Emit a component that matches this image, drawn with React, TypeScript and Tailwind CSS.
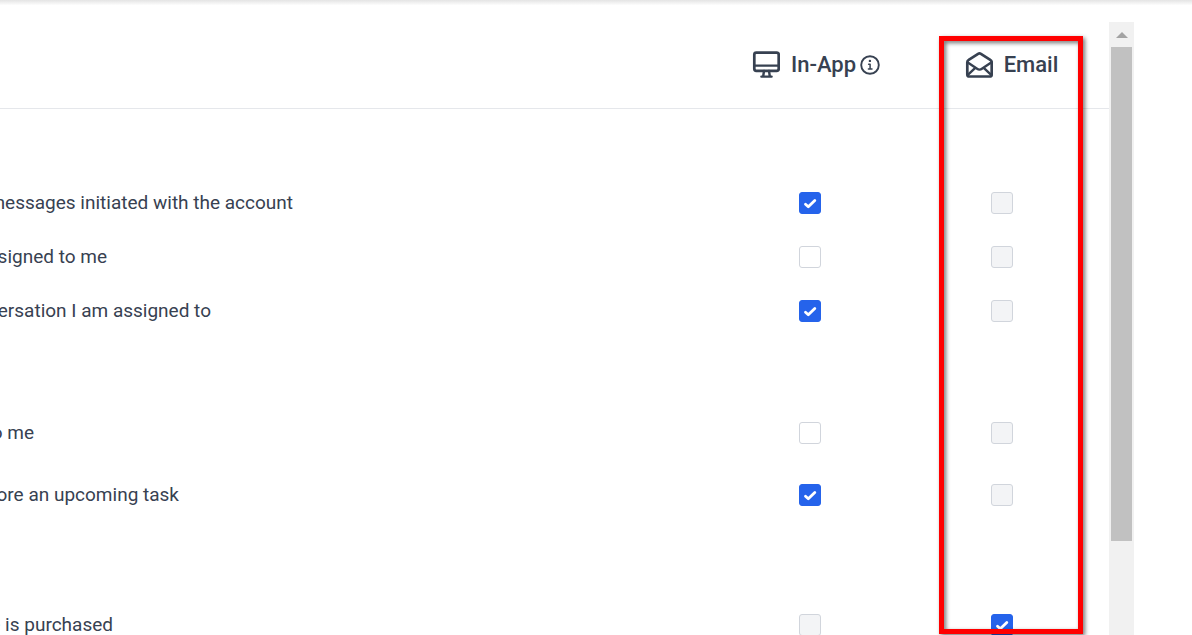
import { useState } from "react";

type Cell = { checked?: boolean; disabled?: boolean };

type Preference = {
  id: string;
  label: string;
  labelWidth: string;
  rowHeight: string;
  inApp: Cell;
  email: Cell;
};

const groups: Preference[][] = [
  [
    { id: "messages", label: "messages initiated with the account", labelWidth: "w-[293px]", rowHeight: "h-[54px]", inApp: { checked: true }, email: { disabled: true } },
    { id: "assigned", label: "ssigned to me", labelWidth: "w-[107px]", rowHeight: "h-[54px]", inApp: {}, email: { disabled: true } },
    { id: "conversation", label: "ersation I am assigned to", labelWidth: "w-[211px]", rowHeight: "h-[54px]", inApp: { checked: true }, email: { disabled: true } },
  ],
  [
    { id: "task-assigned", label: "o me", labelWidth: "w-[34px]", rowHeight: "h-[62px]", inApp: {}, email: { disabled: true } },
    { id: "task-upcoming", label: "ore an upcoming task", labelWidth: "w-[179px]", rowHeight: "h-[62px]", inApp: { checked: true }, email: { disabled: true } },
  ],
  [
    { id: "purchase", label: "e is purchased", labelWidth: "w-[113px]", rowHeight: "h-[62px]", inApp: { disabled: true }, email: { checked: true } },
  ],
];

function MonitorIcon() {
  return (
    <svg className="h-7 w-7 shrink-0" viewBox="0 0 28 28" fill="none" stroke="currentColor" strokeWidth="2.7" strokeLinecap="round" strokeLinejoin="round" aria-hidden="true">
      <rect x="2.3" y="1.6" width="24.4" height="18.2" rx="2" />
      <path d="M2.6 14.6h23.8" strokeWidth="2.2" />
      <path d="M12 20l-.8 5.2M17 20l.8 5.2M9.4 25.6h10.2" strokeWidth="2.4" />
    </svg>
  );
}

function OpenMailIcon() {
  return (
    <svg className="h-7 w-7 shrink-0" viewBox="0 0 28 28" fill="none" stroke="currentColor" strokeWidth="2.7" strokeLinecap="round" strokeLinejoin="round" aria-hidden="true">
      <path d="M2.3 11.2a2.8 2.8 0 0 1 1.4-2.4l9.4-6a2.6 2.6 0 0 1 2.8 0l9.4 6a2.8 2.8 0 0 1 1.4 2.4v12.3a2 2 0 0 1-2 2H4.3a2 2 0 0 1-2-2z" />
      <path d="M2.8 11.6l9.3 6.2a4.2 4.2 0 0 0 4.8 0l9.3-6.2M3.4 23.4l6.6-6.2M25.6 23.4l-6.6-6.2" strokeWidth="2.4" />
    </svg>
  );
}

function InfoIcon() {
  return (
    <svg className="h-5 w-5" viewBox="0 0 20 20" fill="none" stroke="currentColor" strokeWidth="1.9" strokeLinecap="round" strokeLinejoin="round" aria-hidden="true">
      <circle cx="10" cy="10" r="8.8" />
      <path d="M8.6 9.2h1.5v4.6M8.4 14.1h3.6" strokeWidth="1.5" />
      <circle cx="9.9" cy="5.9" r="1.2" fill="currentColor" stroke="none" />
    </svg>
  );
}

function CheckCell({ label, cell }: { label: string; cell: Cell }) {
  const [checked, setChecked] = useState(Boolean(cell.checked));

  return (
    <span className="mx-auto grid h-[22px] w-[22px] place-items-center">
      <input
        type="checkbox"
        aria-label={label}
        checked={checked}
        disabled={cell.disabled}
        onChange={(event) => setChecked(event.target.checked)}
        className="col-start-1 row-start-1 h-[22px] w-[22px] appearance-none rounded-[3px] border border-gray-300 bg-white checked:border-[#2563eb] checked:bg-[#2563eb] disabled:bg-gray-100"
      />
      {checked && (
        <svg className="pointer-events-none col-start-1 row-start-1 h-[22px] w-[22px] text-white" viewBox="0 0 22 22" fill="none" stroke="currentColor" strokeWidth="2.8" strokeLinecap="round" strokeLinejoin="round" aria-hidden="true">
          <path d="M6.5 12.2l2.8 2.6 6.5-6.3" />
        </svg>
      )}
    </span>
  );
}

export default function App() {
  return (
    <div className="relative h-screen overflow-hidden bg-white font-['Roboto','Liberation_Sans',sans-serif] text-[#374151]">
      <div className="h-[22px] bg-linear-to-b from-[#e4e4e4] to-white to-25%" />

      <div className="flex h-full pr-[58px]">
        <div className="min-w-0 flex-1">
          <table className="w-full table-fixed border-collapse" aria-label="Notification preferences">
            <thead>
              <tr className="h-[86px] border-b border-gray-200 text-[22px] leading-7">
                <td />
                <th scope="col" className="w-48 pl-3 font-medium">
                  <div className="flex items-center justify-center">
                    <MonitorIcon />
                    <span className="ml-[11px] whitespace-nowrap">In-App</span>
                    <button type="button" aria-label="About in-app notifications" className="ml-1"><InfoIcon /></button>
                  </div>
                </th>
                <th scope="col" className="w-[203px] pl-2 font-medium">
                  <div className="flex items-center justify-center">
                    <OpenMailIcon />
                    <span className="ml-[11px]">Email</span>
                  </div>
                </th>
              </tr>
            </thead>
            {groups.map((group, index) => (
              <tbody key={group[0].id}>
                <tr className={index === 1 ? "h-16" : "h-[68px]"}>
                  <td colSpan={3} />
                </tr>
                {group.map((item) => (
                  <tr key={item.id} className={item.rowHeight}>
                    <th scope="row" className="text-[19px] leading-7 font-normal">
                      <div className={`flex justify-end whitespace-nowrap ${item.labelWidth}`}>
                        <span>{item.label}</span>
                      </div>
                    </th>
                    <td><CheckCell label={`In-App: ${item.label}`} cell={item.inApp} /></td>
                    <td className="pr-[11px]"><CheckCell label={`Email: ${item.label}`} cell={item.email} /></td>
                  </tr>
                ))}
              </tbody>
            ))}
          </table>
        </div>

        {/* scrollbar */}
        <div className="flex w-[25px] flex-col items-center bg-[#f1f1f1]">
          <button type="button" aria-label="Scroll up" className="flex h-[25px] w-full items-center justify-center">
            <svg className="h-[6px] w-3" viewBox="0 0 12 6" aria-hidden="true">
              <path d="M6 0l6 6H0z" fill="#a3a3a3" />
            </svg>
          </button>
          <div className="h-[494px] w-[21px] bg-[#c1c1c1]" />
        </div>
      </div>

      {/* highlight over the email column */}
      <div className="pointer-events-none absolute top-9 right-[109px] bottom-px w-36 border-[5px] border-[#ff0000] drop-shadow-[2px_2px_2px_rgba(0,0,0,0.55)]" />
    </div>
  );
}
